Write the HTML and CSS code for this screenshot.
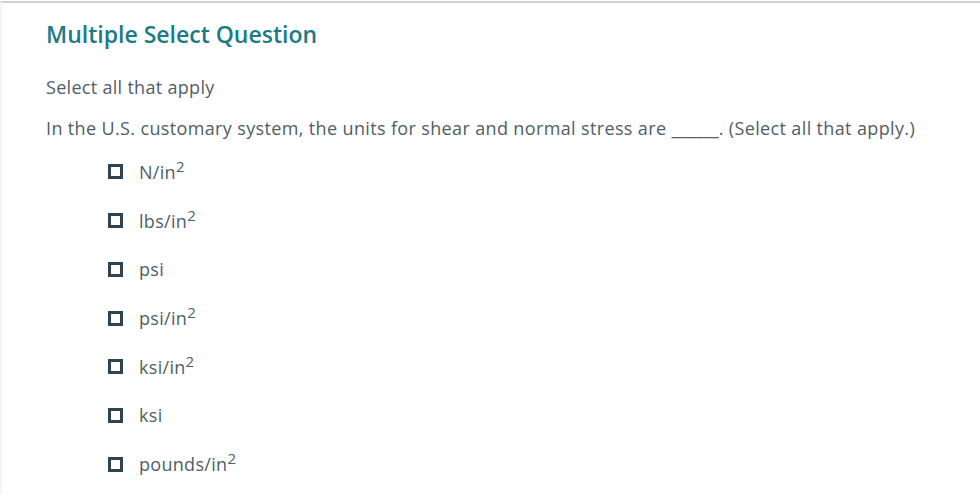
FILE: index.html
```html
<!DOCTYPE html>
<html>
<head>
<meta charset="utf-8">
<link rel="stylesheet" href="styles.css">
</head>
<body>
<div class="panel">
  <h1 class="title">Multiple Select Question</h1>
  <p class="hint">Select all that apply</p>
  <p class="prompt">In the U.S. customary system, the units for shear and normal stress are <span class="blank">______</span>. (Select all that apply.)</p>
  <ul class="options">
    <li class="option"><span class="box"></span><span class="label">N/in<sup>2</sup></span></li>
    <li class="option"><span class="box"></span><span class="label">lbs/in<sup>2</sup></span></li>
    <li class="option"><span class="box"></span><span class="label">psi</span></li>
    <li class="option"><span class="box"></span><span class="label">psi/in<sup>2</sup></span></li>
    <li class="option"><span class="box"></span><span class="label">ksi/in<sup>2</sup></span></li>
    <li class="option"><span class="box"></span><span class="label">ksi</span></li>
    <li class="option"><span class="box"></span><span class="label">pounds/in<sup>2</sup></span></li>
  </ul>
</div>
</body>
</html>
```
FILE: styles.css
```css
html, body {
  margin: 0;
  padding: 0;
  background: #fff;
}
body {
  font-family: "Open Sans", Lato, sans-serif;
  color: #505e67;
  width: 980px;
  height: 496px;
  overflow: hidden;
}
.panel {
  border-top: 2px solid #cfd0d0;
  border-left: 2px solid #f4f4f4;
  margin-top: 1px;
  padding: 16px 0 0 44px;
  height: 493px;
  box-sizing: border-box;
}
.title {
  margin: 0;
  font-size: 23px;
  font-weight: 600;
  color: #1b7b87;
  line-height: 30px;
}
.hint {
  margin: 27px 0 0 0;
  font-size: 18px;
  line-height: 22px;
  letter-spacing: 0.3px;
}
.prompt {
  margin: 19px 0 0 0;
  font-size: 18px;
  line-height: 22px;
  letter-spacing: 0.36px;
}
.blank {
  letter-spacing: 0;
}
.options {
  list-style: none;
  margin: 8.6px 0 0 62px;
  padding: 0;
}
.option {
  display: flex;
  align-items: center;
  height: 48.7px;
  font-size: 18px;
  letter-spacing: 0.3px;
}
.box {
  width: 9px;
  height: 9px;
  border: 3px solid #2e4450;
  margin-right: 16px;
  flex: none;
}
.label sup {
  font-size: 15px;
  line-height: 0;
  vertical-align: 7px;
}
```
